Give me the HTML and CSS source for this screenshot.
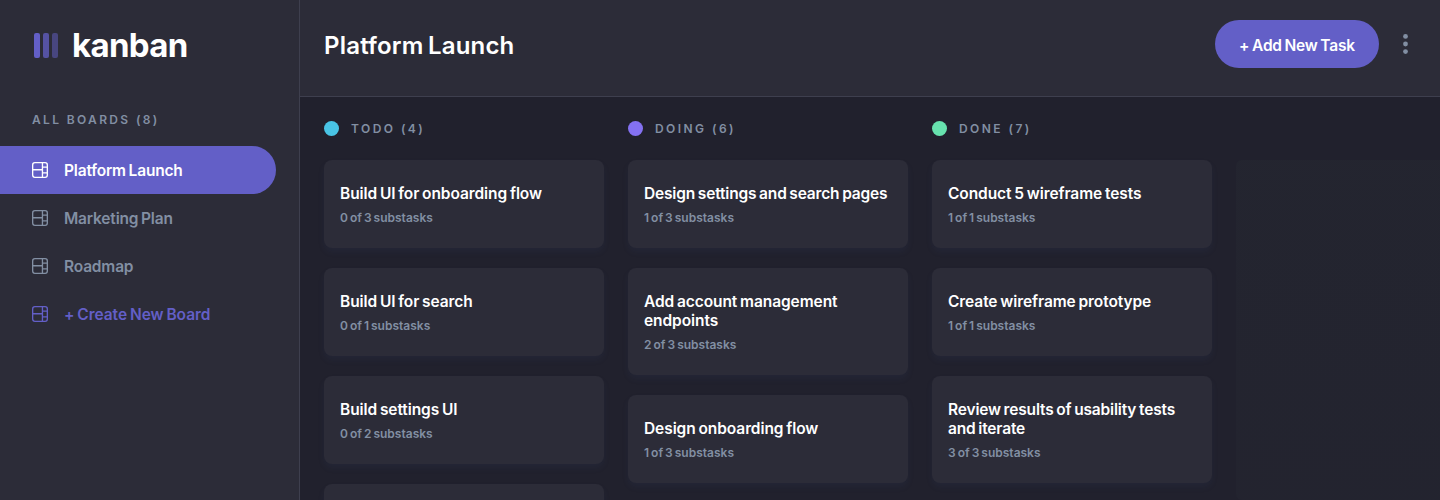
FILE: index.html
```
<!DOCTYPE html>
<html lang="en">
<head>
<meta charset="utf-8">
<title>Kanban</title>
<link rel="stylesheet" href="styles.css">
</head>
<body>
<svg class="sprite" aria-hidden="true">
  <symbol id="board" viewBox="0 0 16 16"><path d="M0 2.889A2.889 2.889 0 0 1 2.889 0H13.11A2.889 2.889 0 0 1 16 2.889V13.11A2.888 2.888 0 0 1 13.111 16H2.89A2.889 2.889 0 0 1 0 13.111V2.89Zm1.333 5.555v4.667c0 .859.697 1.556 1.556 1.556h6.889V8.444H1.333Zm8.445-1.333V1.333h-6.89A1.556 1.556 0 0 0 1.334 2.89V7.11h8.445Zm4.889-1.333H11.11v4.444h3.556V5.778Zm0 5.778H11.11v3.11h2a1.556 1.556 0 0 0 1.556-1.555v-1.555Zm0-7.112V2.89a1.555 1.555 0 0 0-1.556-1.556h-2v3.111h3.556Z"/></symbol>
</svg>
<div class="app">
  <aside class="sidebar">
    <div class="logo">
      <svg class="logo-mark" width="24" height="25" viewBox="0 0 24 25"><rect width="6" height="25" rx="2"/><rect x="9" width="6" height="25" rx="2" opacity=".75"/><rect x="18" width="6" height="25" rx="2" opacity=".5"/></svg>
      <span class="logo-name">kanban</span>
    </div>
    <h2 class="boards-label">ALL BOARDS (8)</h2>
    <nav class="boards">
      <a class="board active"><svg><use href="#board"/></svg><span>Platform Launch</span></a>
      <a class="board"><svg><use href="#board"/></svg><span>Marketing Plan</span></a>
      <a class="board"><svg><use href="#board"/></svg><span>Roadmap</span></a>
      <a class="board create"><svg><use href="#board"/></svg><span>+ Create New Board</span></a>
    </nav>
  </aside>
  <div class="main">
    <header class="header">
      <h1 class="title">Platform Launch</h1>
      <button class="add-task">+ Add New Task</button>
      <svg class="menu" width="5" height="20" viewBox="0 0 5 20"><circle cx="2.5" cy="2.4" r="2.4"/><circle cx="2.5" cy="10" r="2.4"/><circle cx="2.5" cy="17.6" r="2.4"/></svg>
    </header>
    <main class="columns">
      <section class="column">
        <h2 class="column-name"><i class="dot todo"></i><span>TODO (4)</span></h2>
        <article class="card"><h3>Build UI for onboarding flow</h3><p>0 of 3 substasks</p></article>
        <article class="card"><h3>Build UI for search</h3><p>0 of 1 substasks</p></article>
        <article class="card"><h3>Build settings UI</h3><p>0 of 2 substasks</p></article>
        <article class="card"></article>
      </section>
      <section class="column">
        <h2 class="column-name"><i class="dot doing"></i><span>DOING (6)</span></h2>
        <article class="card"><h3 class="long">Design settings and search pages</h3><p>1 of 3 substasks</p></article>
        <article class="card"><h3>Add account management<br>endpoints</h3><p>2 of 3 substasks</p></article>
        <article class="card"><h3>Design onboarding flow</h3><p>1 of 3 substasks</p></article>
      </section>
      <section class="column">
        <h2 class="column-name"><i class="dot done"></i><span>DONE (7)</span></h2>
        <article class="card"><h3>Conduct 5 wireframe tests</h3><p>1 of 1 substasks</p></article>
        <article class="card"><h3>Create wireframe prototype</h3><p>1 of 1 substasks</p></article>
        <article class="card"><h3 class="long">Review results of usability tests<br>and iterate</h3><p>3 of 3 substasks</p></article>
      </section>
      <section class="new-column"></section>
    </main>
  </div>
</div>
</body>
</html>
```
FILE: styles.css
```
* { box-sizing: border-box; margin: 0; }
body { font-family: Inter, "Liberation Sans", sans-serif; background: #21212d; color: #fff; overflow: hidden; }
.sprite { display: none; }
.app { display: flex; height: 500px; }

.sidebar { flex: none; width: 300px; background: #2c2c38; border-right: 1px solid #3e3f4e; }
.logo { display: flex; align-items: center; gap: 14px; height: 91px; padding-left: 34px; }
.logo-mark { fill: #635fc7; }
.logo-name { margin-top: -2px; font-size: 33px; font-weight: 700; letter-spacing: -0.7px; line-height: 40px; }
.boards-label { margin-top: 21px; padding-left: 32px; line-height: 16px; font-size: 12px; font-weight: 600; letter-spacing: 2.35px; color: #828fa3; }
.boards { margin-top: 18px; }
.board { display: flex; align-items: center; gap: 16px; width: 276px; height: 48px; padding-left: 32px; border-radius: 0 24px 24px 0; color: #828fa3; font-size: 15.5px; font-weight: 600; letter-spacing: -0.18px; word-spacing: -1px; }
.board svg { width: 16px; height: 16px; fill: currentColor; }
.board.active { background: #635fc7; color: #fff; }
.board.create { color: #635fc7; letter-spacing: -0.03px; }

.main { flex: 1; min-width: 0; display: flex; flex-direction: column; }
.header { flex: none; display: flex; align-items: flex-start; height: 97px; padding: 20px 32px 0 24px; background: #2c2c38; border-bottom: 1px solid #3e3f4e; }
.title { flex: 1; font-size: 24px; line-height: 52px; font-weight: 600; letter-spacing: 0.2px; word-spacing: -2px; }
.add-task { width: 164px; height: 48px; border: 0; padding: 2px 0 0; border-radius: 24px; background: #635fc7; color: #fff; font: 600 15.5px Inter, sans-serif; letter-spacing: -0.2px; word-spacing: -1px; }
.menu { margin: 14px 0 0 24px; fill: #828fa3; }

.columns { flex: 1; min-height: 0; display: flex; gap: 24px; padding: 24px 0 0 24px; overflow: hidden; }
.column { flex: none; width: 280px; display: flex; flex-direction: column; gap: 20px; }
.column-name { display: flex; align-items: center; gap: 12px; height: 15px; margin-bottom: 4px; font-size: 12px; font-weight: 600; letter-spacing: 2.45px; color: #828fa3; }
.dot { width: 15px; height: 15px; border-radius: 50%; }
.todo { background: #49c4e5; }
.doing { background: #8471f2; }
.done { background: #67e2ae; }
.card { flex: none; min-height: 88px; padding: 24px 16px 23px; border-radius: 8px; background: #2c2c38; box-shadow: 0 4px 6px rgba(54, 78, 126, 0.1); }
.card h3 { font-size: 15.5px; line-height: 19px; font-weight: 600; letter-spacing: -0.08px; word-spacing: -1px; white-space: nowrap; }
.card h3.long { letter-spacing: -0.17px; }
.card p { margin-top: 7px; font-size: 12px; line-height: 15px; font-weight: 600; letter-spacing: 0; word-spacing: -1px; color: #828fa3; }
.new-column { flex: none; width: 280px; margin-top: 39px; border-radius: 6px; background: linear-gradient(180deg, rgba(43, 48, 55, 0.25), rgba(43, 46, 55, 0.2)); }
```
